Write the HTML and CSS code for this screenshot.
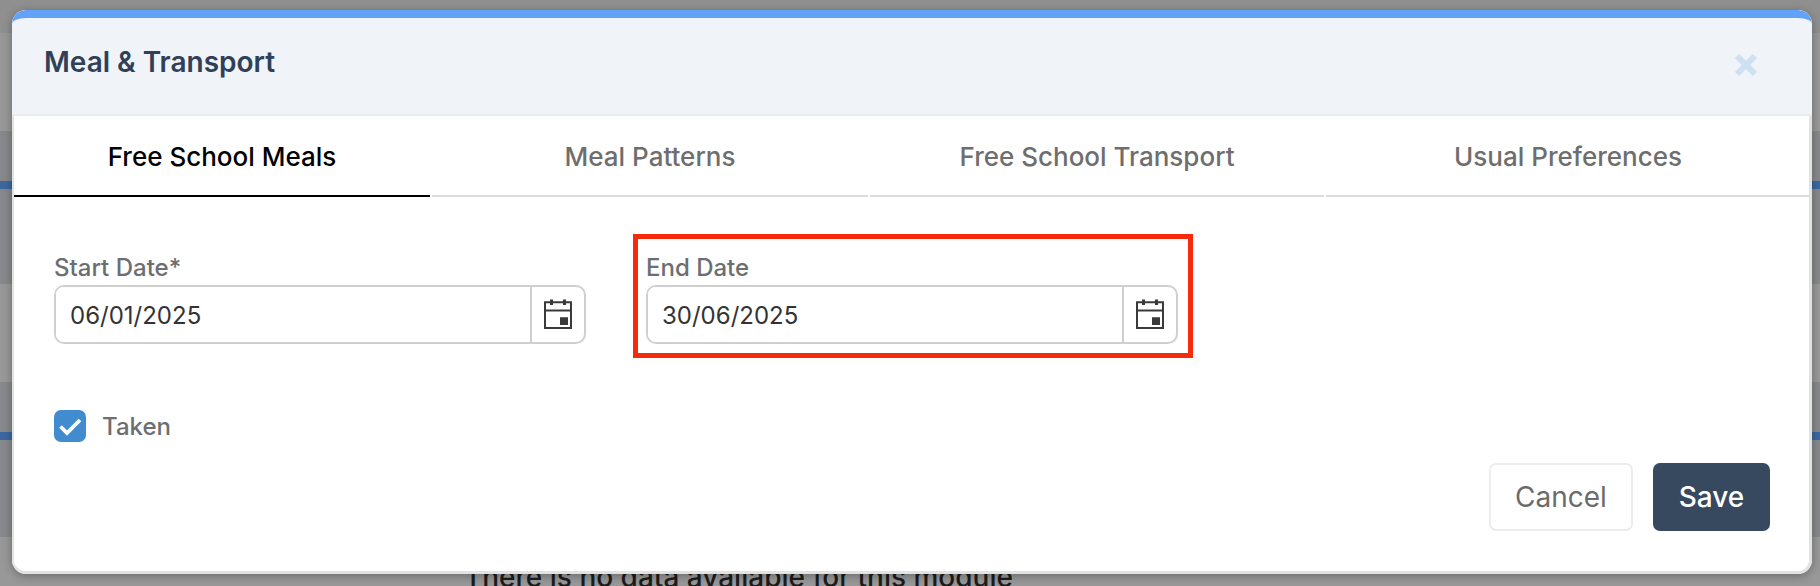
FILE: index.html
```html
<!DOCTYPE html>
<html lang="en">
<head>
    <meta charset="UTF-8">
    <meta name="viewport" content="width=device-width, initial-scale=1.0">
    <title>Meal &amp; Transport</title>
    <link rel="stylesheet" href="styles.css">
</head>
<body>
    <div class="page">
        <div class="band band-top"></div>
        <div class="band band-light"></div>
        <div class="band band-section"><div class="band-accent"></div></div>
        <div class="band band-light"></div>
        <div class="band band-section band-section-low"><div class="band-accent"></div></div>
        <div class="band band-last">There is no data available for this module</div>
    </div>

    <div class="modal">
        <div class="modal-header">
            <h2 class="modal-title">Meal &amp; Transport</h2>
            <svg class="close-icon" viewBox="0 0 22 22" width="22" height="22">
                <path d="M2 2L20 20M20 2L2 20" stroke="#cde1f1" stroke-width="6" fill="none"/>
            </svg>
        </div>
        <div class="modal-body">
            <div class="tabs">
                <div class="tab tab-active">Free School Meals</div>
                <div class="tab">Meal Patterns</div>
                <div class="tab">Free School Transport</div>
                <div class="tab">Usual Preferences</div>
            </div>

            <div class="form-row">
                <div class="date-field date-field-plain">
                    <label class="field-label" for="startDate">Start Date*</label>
                    <div class="date-input">
                        <input type="text" id="startDate" value="06/01/2025">
                        <span class="date-button">
                            <svg viewBox="0 0 28 30" width="28" height="30">
                                <path d="M1 3.2H27V29H1ZM1 11.5H27" stroke="#3a3a3a" stroke-width="2" fill="none"/>
                                <path d="M6 0.5H9V6H6ZM19 0.5H22V6H19ZM16 18.3H24V26H16Z" fill="#3a3a3a"/>
                            </svg>
                        </span>
                    </div>
                </div>
                <div class="date-field date-field-marked">
                    <label class="field-label" for="endDate">End Date</label>
                    <div class="date-input">
                        <input type="text" id="endDate" value="30/06/2025">
                        <span class="date-button">
                            <svg viewBox="0 0 28 30" width="28" height="30">
                                <path d="M1 3.2H27V29H1ZM1 11.5H27" stroke="#3a3a3a" stroke-width="2" fill="none"/>
                                <path d="M6 0.5H9V6H6ZM19 0.5H22V6H19ZM16 18.3H24V26H16Z" fill="#3a3a3a"/>
                            </svg>
                        </span>
                    </div>
                </div>
            </div>

            <div class="check-row">
                <span class="check-box">
                    <svg viewBox="0 0 32 32" width="32" height="32">
                        <path d="M6.5 16.5L13 23L26 10" stroke="#fff" stroke-width="3.8" fill="none"/>
                    </svg>
                </span>
                <span class="check-label">Taken</span>
            </div>

            <div class="modal-actions">
                <button class="button button-cancel">Cancel</button>
                <button class="button button-save">Save</button>
            </div>
        </div>
    </div>
</body>
</html>
```

FILE: styles.css
```css
* {
    box-sizing: border-box;
}
html, body {
    margin: 0;
    height: 586px;
    overflow: hidden;
}
body {
    font-family: Inter, "Noto Sans", sans-serif;
    background-color: #8f8f90;
    position: relative;
}
.page {
    display: flex;
    flex-direction: column;
    height: 586px;
}
.band {
    flex-shrink: 0;
}
.band-top {
    height: 33px;
    background-color: #8f8f90;
}
.band-light {
    height: 98px;
    background-color: #989898;
}
.band-section {
    height: 153px;
    padding-top: 50px;
    background-color: #87888b;
}
.band-section-low {
    height: 155px;
}
.band-accent {
    height: 8px;
    background-color: #3e67a0;
}
.band-last {
    height: 49px;
    background-color: #989898;
    padding: 24px 0 0 464px;
    font-size: 28px;
    font-weight: 500;
    line-height: 32px;
    color: #1c1c1c;
    white-space: nowrap;
    overflow: hidden;
}

/* modal sits over the page */
.modal {
    position: absolute;
    left: 12px;
    top: 10px;
    width: 1800px;
    height: 564px;
    background-color: #fff;
    border-radius: 14px;
    box-shadow: 0 2px 10px rgba(0, 0, 0, 0.3);
    display: flex;
    flex-direction: column;
    overflow: hidden;
}
.modal-header {
    height: 106px;
    flex-shrink: 0;
    background-color: #f0f4f9;
    border-top: 8px solid #62a3f9;
    border-bottom: 2px solid #e9ebee;
    border-radius: 14px 14px 0 0;
    display: flex;
    justify-content: space-between;
    padding: 0 55px 0 32px;
}
.modal-title {
    margin: 20px 0 0;
    font-size: 28px;
    font-weight: 600;
    line-height: 48px;
    color: #2f4058;
}
.close-icon {
    margin-top: 36px;
}
.modal-body {
    flex: 1;
    border: solid #e2e2e2;
    border-width: 0 3px 3px 2px;
    border-radius: 0 0 14px 14px;
}
.tabs {
    display: grid;
    grid-template-columns: 416px 436px 454px 484px;
    gap: 2px;
}
.tab {
    height: 81px;
    line-height: 82px;
    text-align: center;
    font-size: 26px;
    font-weight: 500;
    color: #6e6e6e;
    border-bottom: 2px solid #dcdcdc;
}
.tab-active {
    color: #000;
    border-bottom-color: #000;
}
.form-row {
    display: flex;
    align-items: flex-start;
    padding: 37px 0 0 40px;
}
.date-field-plain {
    width: 532px;
    margin: 18px 47px 0 0;
}
.date-field-marked {
    width: 560px;
    padding: 13px 10px 9px 8px;
    border: 5px solid #f72a0c;
}
.field-label {
    display: block;
    font-size: 24px;
    font-weight: 500;
    line-height: 32px;
    margin-bottom: 1px;
    color: #6c6e72;
}
.date-input {
    display: flex;
    height: 59px;
    border: 2px solid #cfcfcf;
    border-radius: 10px;
    overflow: hidden;
}
.date-input input {
    flex: 1;
    min-width: 0;
    border: none;
    outline: none;
    padding: 2px 0 0 14px;
    font-family: inherit;
    font-size: 24px;
    color: #333;
    background-color: #fff;
}
.date-button {
    width: 54px;
    padding-bottom: 2px;
    border-left: 2px solid #cfcfcf;
    display: flex;
    align-items: center;
    justify-content: center;
}
.check-row {
    display: flex;
    align-items: center;
    gap: 16px;
    margin: 52px 0 0 40px;
}
.check-box {
    width: 32px;
    height: 32px;
    border-radius: 7px;
    background-color: #408ccf;
    display: flex;
}
.check-label {
    font-size: 24px;
    font-weight: 500;
    color: #6c6e72;
}
.modal-actions {
    display: flex;
    justify-content: flex-end;
    gap: 20px;
    margin-top: 21px;
    padding-right: 39px;
}
.button {
    height: 68px;
    border-radius: 7px;
    font-family: inherit;
    font-size: 28px;
    cursor: pointer;
}
.button-cancel {
    width: 144px;
    background-color: #fff;
    border: 2px solid #ececec;
    color: #6b6b6b;
}
.button-save {
    width: 117px;
    background-color: #36495f;
    border: none;
    font-weight: 500;
    color: #fff;
}
```
